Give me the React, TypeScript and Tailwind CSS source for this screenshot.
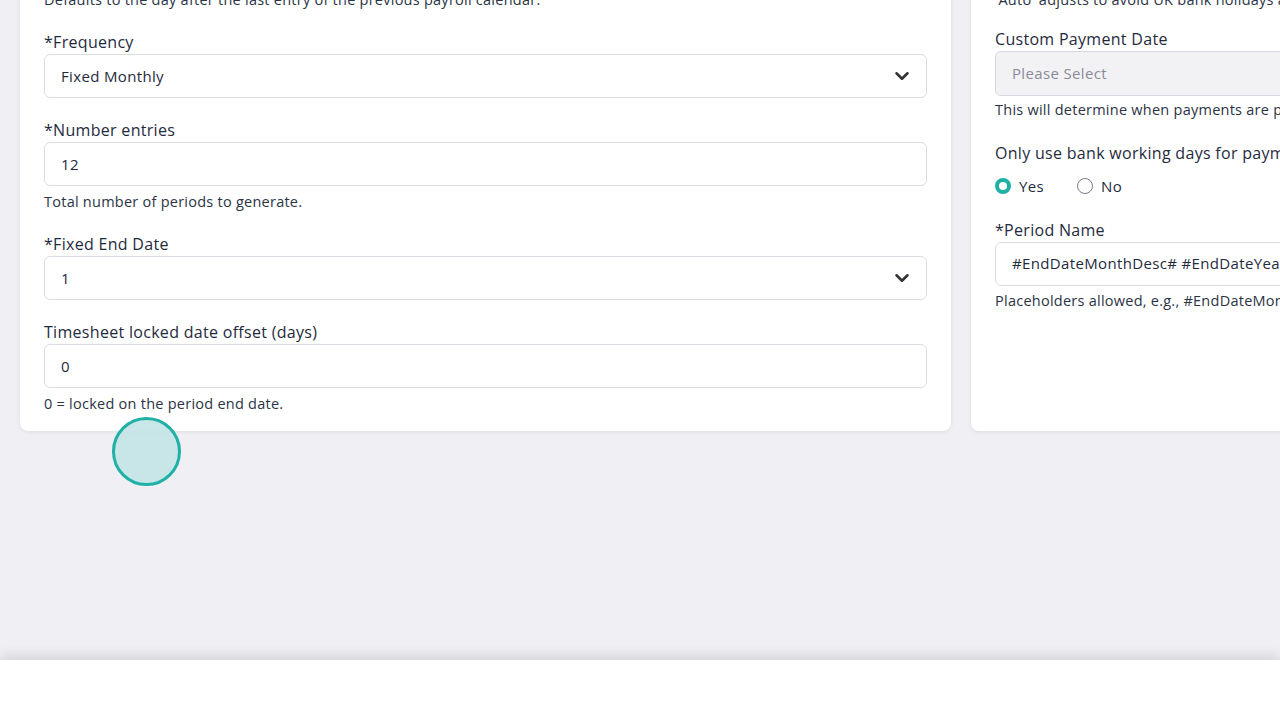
import { ChevronDown } from 'lucide-react';

const font = { fontFamily: '"Open Sans", "Noto Sans", sans-serif' };

function Label({ children }: { children: React.ReactNode }) {
  return (
    <div className="text-[16px] leading-5 font-medium tracking-[0.3px] text-[#1f2b3d] mb-[2px] whitespace-nowrap">
      {children}
    </div>
  );
}

function Help({ children, className = '' }: { children: React.ReactNode; className?: string }) {
  return (
    <div className={`text-[14.5px] leading-5 tracking-[0.25px] text-[#2b3445] whitespace-nowrap ${className}`}>
      {children}
    </div>
  );
}

function Select({ value }: { value: string }) {
  return (
    <div className="h-11 rounded-md border border-[#dcdde3] bg-white flex items-center justify-between pl-4 pr-[13px] text-[15px] tracking-[0.35px] text-[#1f2b3d]">
      <span>{value}</span>
      <ChevronDown size={22} strokeWidth={2.75} className="text-[#333]" />
    </div>
  );
}

function Input({ value, muted, tall }: { value: string; muted?: boolean; tall?: boolean }) {
  return (
    <div
      className={`${tall ? 'h-[45px]' : 'h-11'} rounded-md border flex items-center pl-4 text-[15px] tracking-[0.35px] whitespace-nowrap overflow-hidden ${
        muted ? 'bg-[#f2f2f5] border-[#d6d7df] text-[#8a8b99]' : 'bg-white border-[#dcdde3] text-[#1f2b3d]'
      }`}
    >
      {value}
    </div>
  );
}

function Radio({ checked, label }: { checked?: boolean; label: string }) {
  return (
    <label className="flex items-center gap-2 text-[15px] tracking-[0.35px] text-[#1f2b3d]">
      <span
        className={`w-4 h-4 rounded-full bg-white ${
          checked ? 'border-[4px] border-[#1eb0a5]' : 'border-[1.5px] border-[#7b7c8a]'
        }`}
      />
      {label}
    </label>
  );
}

export default function App() {
  return (
    <div className="w-[1280px] h-[720px] overflow-hidden bg-[#f0eff4] flex flex-col" style={font}>
      <div className="flex-1 relative overflow-hidden">
        <div className="flex gap-5 pl-5 -mt-[20px]">
          {/* payroll calendar */}
          <div className="w-[931px] shrink-0 bg-white rounded-b-lg shadow-[0_1px_4px_rgba(0,0,0,0.08)] px-6 pt-[10px] pb-[17px]">
            <Help>Defaults to the day after the last entry of the previous payroll calendar.</Help>
            <div className="mt-[22px]">
              <Label>*Frequency</Label>
              <Select value="Fixed Monthly" />
            </div>
            <div className="mt-[22px]">
              <Label>*Number entries</Label>
              <Input value="12" />
              <Help className="mt-[6px]">Total number of periods to generate.</Help>
            </div>
            <div className="mt-[22px]">
              <Label>*Fixed End Date</Label>
              <Select value="1" />
            </div>
            <div className="mt-[22px]">
              <Label>Timesheet locked date offset (days)</Label>
              <Input value="0" />
              <Help className="mt-[6px]">0 = locked on the period end date.</Help>
            </div>
          </div>

          {/* payment settings */}
          <div className="w-[420px] shrink-0 bg-white rounded-b-lg shadow-[0_1px_4px_rgba(0,0,0,0.08)] px-6 pt-[10px] h-[451px]">
            <Help>'Auto' adjusts to avoid UK bank holidays and weekends.</Help>
            <div className="mt-[19px]">
              <Label>Custom Payment Date</Label>
              <Input value="Please Select" muted tall />
              <Help className="mt-[4px]">This will determine when payments are processed.</Help>
            </div>
            <div className="mt-[23px]">
              <Label>Only use bank working days for payments</Label>
              <div className="flex gap-[33px] mt-[12px]">
                <Radio checked label="Yes" />
                <Radio label="No" />
              </div>
            </div>
            <div className="mt-[22px]">
              <Label>*Period Name</Label>
              <Input value="#EndDateMonthDesc# #EndDateYear#" />
              <Help className="mt-[5px]">Placeholders allowed, e.g., #EndDateMonthDesc#, #EndDateYear#.</Help>
            </div>
          </div>
        </div>

        {/* click marker */}
        <div className="absolute left-[112px] top-[417px] w-[69px] h-[69px] rounded-full border-[3px] border-[#1fb1a6] bg-[#c3e4e6]/90" />
      </div>
      <div className="h-[60px] bg-white shadow-[0_-4px_12px_rgba(0,0,0,0.12)] relative" />
    </div>
  );
}
